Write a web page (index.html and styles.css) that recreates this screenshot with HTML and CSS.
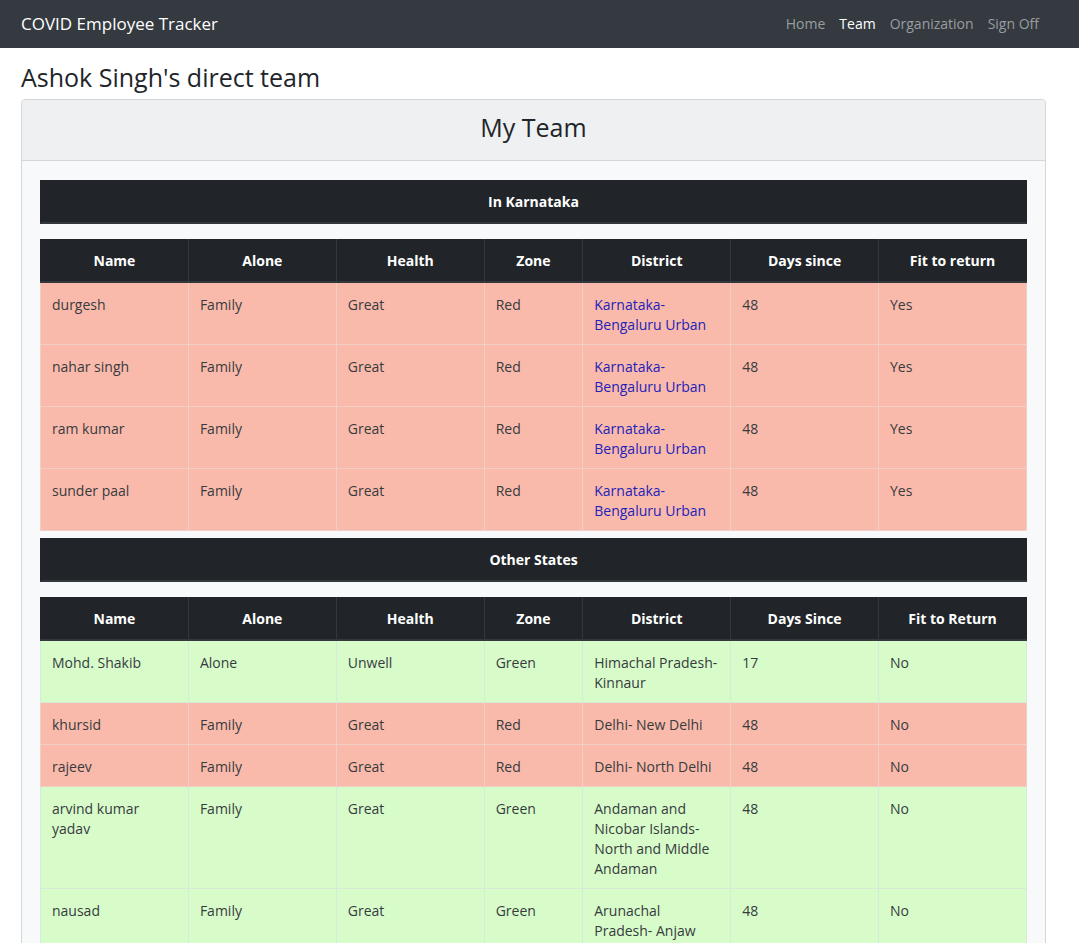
FILE: index.html
```html
<!DOCTYPE html>
<html lang="en">
<head>
<meta charset="utf-8">
<meta name="viewport" content="width=device-width, initial-scale=1">
<title>COVID Employee Tracker</title>
<link rel="stylesheet" href="styles.css">
</head>
<body>
<header class="navbar">
  <a class="brand" href="#">COVID Employee Tracker</a>
  <nav class="nav">
    <a class="nav-link" href="#">Home</a>
    <a class="nav-link active" href="#" aria-current="page">Team</a>
    <a class="nav-link" href="#">Organization</a>
    <a class="nav-link" href="#">Sign Off</a>
  </nav>
</header>
<main class="page">
  <h1 class="page-title">Ashok Singh's direct team</h1>
  <section class="card">
    <h2 class="card-header">My Team</h2>
    <div class="card-body">
      <section class="group">
        <h3 class="group-title" id="karnataka">In Karnataka</h3>
        <table class="team" aria-labelledby="karnataka">
          <colgroup><col><col><col><col class="narrow"><col><col><col></colgroup>
          <thead>
            <tr><th>Name</th><th>Alone</th><th>Health</th><th>Zone</th><th>District</th><th>Days since</th><th>Fit to return</th></tr>
          </thead>
          <tbody>
            <tr class="red"><td>durgesh</td><td>Family</td><td>Great</td><td>Red</td><td class="home">Karnataka- Bengaluru Urban</td><td>48</td><td>Yes</td></tr>
            <tr class="red"><td>nahar singh</td><td>Family</td><td>Great</td><td>Red</td><td class="home">Karnataka- Bengaluru Urban</td><td>48</td><td>Yes</td></tr>
            <tr class="red"><td>ram kumar</td><td>Family</td><td>Great</td><td>Red</td><td class="home">Karnataka- Bengaluru Urban</td><td>48</td><td>Yes</td></tr>
            <tr class="red"><td>sunder paal</td><td>Family</td><td>Great</td><td>Red</td><td class="home">Karnataka- Bengaluru Urban</td><td>48</td><td>Yes</td></tr>
          </tbody>
        </table>
      </section>
      <section class="group">
        <h3 class="group-title" id="others">Other States</h3>
        <table class="team" aria-labelledby="others">
          <colgroup><col><col><col><col class="narrow"><col><col><col></colgroup>
          <thead>
            <tr><th>Name</th><th>Alone</th><th>Health</th><th>Zone</th><th>District</th><th>Days Since</th><th>Fit to Return</th></tr>
          </thead>
          <tbody>
            <tr class="green"><td>Mohd. Shakib</td><td>Alone</td><td>Unwell</td><td>Green</td><td>Himachal Pradesh- Kinnaur</td><td>17</td><td>No</td></tr>
            <tr class="red"><td>khursid</td><td>Family</td><td>Great</td><td>Red</td><td>Delhi- New Delhi</td><td>48</td><td>No</td></tr>
            <tr class="red"><td>rajeev</td><td>Family</td><td>Great</td><td>Red</td><td>Delhi- North Delhi</td><td>48</td><td>No</td></tr>
            <tr class="green"><td>arvind kumar yadav</td><td>Family</td><td>Great</td><td>Green</td><td>Andaman and Nicobar Islands- North and Middle Andaman</td><td>48</td><td>No</td></tr>
            <tr class="green"><td>nausad</td><td>Family</td><td>Great</td><td>Green</td><td>Arunachal Pradesh- Anjaw</td><td>48</td><td>No</td></tr>
          </tbody>
        </table>
      </section>
    </div>
  </section>
</main>
</body>
</html>
```
FILE: styles.css
```css
* { box-sizing: border-box; }

body {
  margin: 0;
  background: #fff;
  color: #212529;
  font-family: "Segoe UI", "Open Sans", "Noto Sans", sans-serif;
  font-size: 14px;
  line-height: 20px;
}

h1, h2, h3 { margin: 0; }

.navbar {
  display: flex;
  align-items: center;
  justify-content: space-between;
  min-height: 48px;
  padding: 0 40px 0 21px;
  background: #343a40;
}

.brand {
  color: #fff;
  font-size: 17px;
  line-height: 28px;
  text-decoration: none;
}

.nav { display: flex; gap: 14px; }

.nav-link {
  color: #9a9da0;
  text-decoration: none;
}

.nav-link.active { color: #fff; }

.page { padding: 14px 33px 24px 21px; }

.page-title {
  font-size: 25px;
  font-weight: 500;
  line-height: 30px;
  margin-bottom: 7px;
}

.card {
  border: 1px solid #d4d6d8;
  border-radius: 4px;
  background: #f8f9fb;
}

.card-header {
  padding: 12px 18px 17px;
  border-bottom: 1px solid #d4d6d8;
  border-radius: 3px 3px 0 0;
  background: #eff0f2;
  font-size: 25px;
  font-weight: 500;
  line-height: 31px;
  text-align: center;
}

.card-body {
  display: flex;
  flex-direction: column;
  gap: 7px;
  padding: 19px 18px;
}

.group-title {
  margin-bottom: 15px;
  padding: 11px 11px 10px;
  border: 1px solid #212529;
  border-bottom: 2px solid #32383e;
  background: #212529;
  color: #fff;
  font-size: 14px;
  font-weight: 700;
  line-height: 20px;
  text-align: center;
}

.team {
  width: 100%;
  table-layout: fixed;
  border-collapse: collapse;
}

.narrow { width: 10%; }

.team th {
  padding: 12px 11px 10px;
  border: 1px solid #32383e;
  border-width: 0 1px 2px;
  background: #212529;
  color: #fff;
  text-align: center;
}

.team th:first-child { border-left-color: #212529; }
.team th:last-child { border-right-color: #212529; }

.team td {
  padding: 12px 11px 9px;
  border: 1px solid #f0cfc7;
  color: #373b3e;
  vertical-align: top;
}

.red td { background: #fabaab; }

.green td {
  border-color: #d6ebd5;
  background: #d7fcca;
}

.team .home { color: #2222b8; }
```
